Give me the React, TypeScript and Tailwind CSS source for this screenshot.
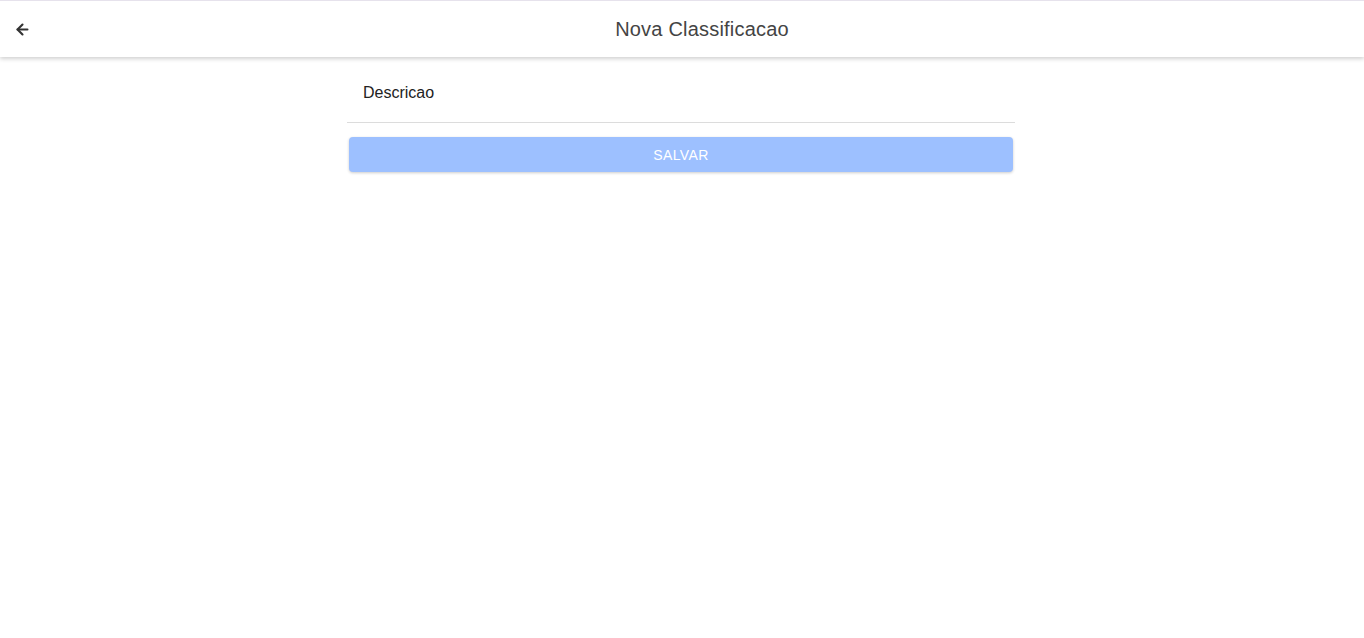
import { ArrowLeft } from "lucide-react";

export default function App() {
  return (
    <div className="min-h-[638px] w-full bg-white" style={{ fontFamily: "'Liberation Sans', Arial, sans-serif" }}>
      {/* Toolbar */}
      <header className="relative flex h-[57px] items-center border-t border-[#e6e2ec] bg-white shadow-[0_2px_4px_rgba(0,0,0,0.18)]">
        <button className="ml-[13px] flex h-[18px] w-[18px] items-center justify-center text-[#333]">
          <ArrowLeft className="h-[17px] w-[17px]" strokeWidth={3} />
        </button>
        <h1 className="pointer-events-none absolute left-0 right-0 text-center text-[20px] tracking-[0.01em] text-[#444]">
          <span className="ml-[40px]">Nova Classificacao</span>
        </h1>
      </header>

      {/* Form */}
      <div className="mx-auto w-[670px] pr-[2px]">
        <div className="h-[66px] border-b border-[#dcdcdc] pl-4 pt-[26px] text-[16px] leading-[20px] text-[#222]">
          Descricao
        </div>
        <button className="mx-[2px] mt-[14px] flex h-[35px] w-[664px] items-center justify-center rounded-[4px] bg-[#9dc0ff] pt-[2px] text-[14px] tracking-[0.03em] text-white shadow-[0_1px_3px_rgba(0,0,0,0.2)]">
          SALVAR
        </button>
      </div>
    </div>
  );
}
